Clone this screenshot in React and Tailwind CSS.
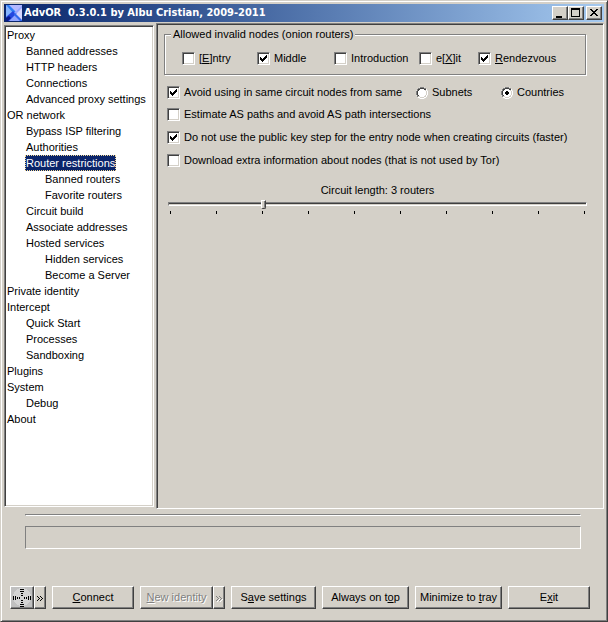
const SUNKEN =
  'border border-t-[#808080] border-l-[#808080] border-r-white border-b-white shadow-[inset_1px_1px_0_#404040,inset_-1px_-1px_0_#d4d0c8]';
const RAISED =
  'border border-t-white border-l-white border-r-[#404040] border-b-[#404040] shadow-[inset_-1px_-1px_0_#808080]';

const TREE = [
  {
    label: 'Proxy',
    children: [
      { label: 'Banned addresses' },
      { label: 'HTTP headers' },
      { label: 'Connections' },
      { label: 'Advanced proxy settings' },
    ],
  },
  {
    label: 'OR network',
    children: [
      { label: 'Bypass ISP filtering' },
      { label: 'Authorities' },
      {
        label: 'Router restrictions',
        selected: true,
        children: [{ label: 'Banned routers' }, { label: 'Favorite routers' }],
      },
      { label: 'Circuit build' },
      { label: 'Associate addresses' },
      {
        label: 'Hosted services',
        children: [{ label: 'Hidden services' }, { label: 'Become a Server' }],
      },
    ],
  },
  { label: 'Private identity' },
  {
    label: 'Intercept',
    children: [{ label: 'Quick Start' }, { label: 'Processes' }, { label: 'Sandboxing' }],
  },
  { label: 'Plugins' },
  { label: 'System', children: [{ label: 'Debug' }] },
  { label: 'About' },
];

function TreeList({ items, nested }) {
  return (
    <ul className={nested ? 'pl-[19px]' : ''}>
      {items.map((item) => (
        <li key={item.label}>
          <button
            type="button"
            className={`block h-4 px-px leading-4 whitespace-nowrap ${
              item.selected
                ? 'bg-[#0a246a] text-white outline-1 -outline-offset-1 outline-dotted outline-[#f5db95]'
                : ''
            }`}
          >
            {item.label}
          </button>
          {item.children && <TreeList items={item.children} nested />}
        </li>
      ))}
    </ul>
  );
}

function Check({ children, checked }) {
  return (
    <label className="flex items-center gap-1 leading-[15px] whitespace-nowrap">
      <span className="grid shrink-0">
        <input
          type="checkbox"
          defaultChecked={checked}
          className={`peer col-start-1 row-start-1 size-[13px] appearance-none bg-white ${SUNKEN}`}
        />
        <svg
          viewBox="0 0 13 13"
          shapeRendering="crispEdges"
          className="pointer-events-none invisible col-start-1 row-start-1 size-[13px] peer-checked:visible"
        >
          <path
            d="M3 5h1v3h-1zM4 6h1v3h-1zM5 7h1v3h-1zM6 6h1v3h-1zM7 5h1v3h-1zM8 4h1v3h-1zM9 3h1v3h-1z"
            fill="#000"
          />
        </svg>
      </span>
      <span>{children}</span>
    </label>
  );
}

function Radio({ children, checked }) {
  return (
    <label className="flex items-center gap-1 leading-[15px] whitespace-nowrap">
      <span className="grid shrink-0">
        <input
          type="radio"
          name="same-circuit"
          defaultChecked={checked}
          className="peer col-start-1 row-start-1 size-3 appearance-none rounded-full bg-white"
        />
        <svg
          viewBox="0 0 12 12"
          shapeRendering="crispEdges"
          className="pointer-events-none col-start-1 row-start-1 size-3"
        >
          <path d="M4 0h4v1h-4zM2 1h2v1h-2zM8 1h2v1h-2zM1 2h1v2h-1zM0 4h1v4h-1zM1 8h1v2h-1z" fill="#808080" />
          <path d="M4 1h4v1h-4zM2 2h2v1h-2zM8 2h2v1h-2zM2 3h1v1h-1zM1 4h1v4h-1zM2 8h1v1h-1z" fill="#404040" />
          <path d="M9 3h1v1h-1zM10 4h1v4h-1zM9 8h1v1h-1zM2 9h2v1h-2zM8 9h2v1h-2zM4 10h4v1h-4z" fill="#d4d0c8" />
          <path d="M10 2h1v2h-1zM11 4h1v4h-1zM10 8h1v2h-1zM2 10h2v1h-2zM8 10h2v1h-2zM4 11h4v1h-4z" fill="#fff" />
        </svg>
        <svg
          viewBox="0 0 12 12"
          shapeRendering="crispEdges"
          className="pointer-events-none invisible col-start-1 row-start-1 size-3 peer-checked:visible"
        >
          <path d="M5 4h2v1h1v2h-1v1h-2v-1h-1v-2h1z" fill="#000" />
        </svg>
      </span>
      <span>{children}</span>
    </label>
  );
}

function PushButton({ className, children, ...rest }) {
  return (
    <button
      type="button"
      className={`flex h-[23px] shrink-0 items-center justify-center whitespace-nowrap disabled:text-[#808080] disabled:text-shadow-[1px_1px_0_#fff] ${RAISED} ${className}`}
      {...rest}
    >
      {children}
    </button>
  );
}

function CaptionButton({ label, children }) {
  return (
    <button type="button" aria-label={label} className={`h-3.5 w-4 bg-[#d4d0c8] ${RAISED}`}>
      <svg viewBox="0 0 14 12" shapeRendering="crispEdges" className="h-3 w-3.5">
        {children}
      </svg>
    </button>
  );
}

function AppIcon() {
  return (
    <svg viewBox="0 0 16 16" className="size-4 shrink-0">
      <path d="M0 0h16v16h-16z" fill="#b4b8ff" />
      <path d="M0 0v16L8 8z" fill="#86b4ff" />
      <path d="M16 0v16L8 8z" fill="#d4d6ff" />
      <path d="M0 16h16L8 8z" fill="#8fa4ff" />
      <path d="M0 0h3l8 8-2 2z" fill="#2f80f6" />
      <path d="M0 12l7-6 3 3-7 7H0z" fill="#2448e0" />
      <path d="M0 13l3-2 2 2-3 3H0z" fill="#0a1a8c" />
      <path d="M8 8L16 0v3l-6 6z" fill="#9aa6ff" />
      <path d="M9 8l7 7v1h-2l-6-6z" fill="#2f68ee" />
    </svg>
  );
}

function CrosshairIcon() {
  return (
    <svg viewBox="0 0 22 21" shapeRendering="crispEdges" className="h-[21px] w-[22px]">
      <path d="M0 0h21v20h-21z" fill="#c0c0c0" />
      <circle cx="11" cy="10" r="9" fill="#d4d4d4" />
      <path
        d="M9 2h4v1h-4zM9 4h4v1h-4zM10 6h2v1h-2zM10 8h2v1h-2zM10 13h2v1h-2zM10 15h2v1h-2zM9 17h4v1h-4zM9 19h4v1h-4z"
        fill="#000"
      />
      <path
        d="M2 9h1v4h-1zM4 9h1v4h-1zM6 10h1v2h-1zM8 10h1v2h-1zM13 10h1v2h-1zM15 10h1v2h-1zM17 9h1v4h-1zM19 9h1v4h-1z"
        fill="#000"
      />
      <path d="M21 0h1v21h-22v-1h21z" fill="#808080" />
    </svg>
  );
}

function Chevrons({ disabled }) {
  const d = 'M0 0h1v1h1v1h1v1h-1v1h-1v1h-1v-1h1v-1h1v-1h-1v-1h-1zM3 0h1v1h1v1h1v1h-1v1h-1v1h-1v-1h1v-1h1v-1h-1v-1h-1z';
  return (
    <svg viewBox="0 0 7 6" shapeRendering="crispEdges" className="mt-0.5 h-1.5 w-[7px] shrink-0">
      {disabled && <path d={d} fill="#fff" transform="translate(1 1)" />}
      <path d={d} fill={disabled ? '#808080' : '#000'} />
    </svg>
  );
}

export default function App() {
  return (
    <div className="flex min-h-screen flex-col border border-t-[#d4d0c8] border-r-[#404040] border-b-[#404040] border-l-[#d4d0c8] bg-[#d4d0c8] p-[3px] font-['Liberation_Sans',Arial,sans-serif] text-[11px] text-black shadow-[inset_1px_1px_0_#fff,inset_-1px_-1px_0_#808080]">
      <header className="flex h-[18px] items-center bg-linear-to-r from-[#0a246a] to-[#a6caf0] px-0.5">
        <AppIcon />
        <h1 className="flex-1 pl-0.5 font-['DejaVu_Sans_Condensed','DejaVu_Sans',sans-serif] font-bold whitespace-pre text-white">
          AdvOR  0.3.0.1 by Albu Cristian, 2009-2011
        </h1>
        <div className="flex">
          <CaptionButton label="Minimize">
            <path d="M3 9h6v2h-6z" />
          </CaptionButton>
          <CaptionButton label="Maximize">
            <path d="M2 1h9v9h-9zM3 3v6h7v-6z" fillRule="evenodd" />
          </CaptionButton>
        </div>
        <div className="flex pl-0.5">
          <CaptionButton label="Close">
            <path d="M3 2h2v1h1v1h2v-1h1v-1h2v1h-1v1h-1v1h-1v1h1v1h1v1h1v1h-2v-1h-1v-1h-2v1h-1v1h-2v-1h1v-1h1v-1h1v-1h-1v-1h-1v-1h-1z" />
          </CaptionButton>
        </div>
      </header>

      <div className="mt-px flex flex-1 gap-0.5">
        <nav className={`my-0.5 w-[150px] shrink-0 bg-white p-px ${SUNKEN}`}>
          <TreeList items={TREE} />
        </nav>

        <main className={`flex-1 pt-[3px] pr-4 pl-[7px] ${SUNKEN}`}>
          <fieldset className="mr-px border border-[#808080] px-1.5 pb-2 shadow-[1px_1px_0_#fff,inset_1px_1px_0_#fff]">
            <legend className="bg-[#d4d0c8] px-0.5 leading-[14px]">Allowed invalid nodes (onion routers)</legend>
            <div className="grid grid-cols-[75px_77px_85px_59px_auto] pt-2.5 pl-[11px]">
              <Check>
                [<u>E</u>]ntry
              </Check>
              <Check checked>Middle</Check>
              <Check>Introduction</Check>
              <Check>
                e[<u>X</u>]it
              </Check>
              <Check checked>
                <u>R</u>endezvous
              </Check>
            </div>
          </fieldset>

          <div className="pl-[3px]">
            <div className="grid grid-cols-[249px_85px_auto] pt-2.5">
              <Check checked>Avoid using in same circuit nodes from same</Check>
              <Radio>Subnets</Radio>
              <Radio checked>Countries</Radio>
            </div>
            <div className="flex flex-col gap-2 pt-[7px]">
              <Check>Estimate AS paths and avoid AS path intersections</Check>
              <Check checked>
                Do not use the public key step for the entry node when creating circuits (faster)
              </Check>
              <Check>Download extra information about nodes (that is not used by Tor)</Check>
            </div>
          </div>

          <div className="flex flex-col pt-[15px] pl-1">
            <label htmlFor="circuit-length" className="text-center leading-[15px]">
              Circuit length: 3 routers
            </label>
            <input
              id="circuit-length"
              type="range"
              min="1"
              max="10"
              defaultValue="3"
              className="mt-0.5 block h-2 w-full appearance-none bg-transparent [&::-webkit-slider-runnable-track]:h-1 [&::-webkit-slider-runnable-track]:border [&::-webkit-slider-runnable-track]:border-t-[#808080] [&::-webkit-slider-runnable-track]:border-r-white [&::-webkit-slider-runnable-track]:border-b-white [&::-webkit-slider-runnable-track]:border-l-[#808080] [&::-webkit-slider-runnable-track]:shadow-[inset_0_1px_0_#404040] [&::-webkit-slider-thumb]:-mt-[3px] [&::-webkit-slider-thumb]:h-[9px] [&::-webkit-slider-thumb]:w-[5px] [&::-webkit-slider-thumb]:appearance-none [&::-webkit-slider-thumb]:rounded-b-xs [&::-webkit-slider-thumb]:border [&::-webkit-slider-thumb]:border-t-white [&::-webkit-slider-thumb]:border-r-[#404040] [&::-webkit-slider-thumb]:border-b-[#404040] [&::-webkit-slider-thumb]:border-l-white [&::-webkit-slider-thumb]:bg-[#d4d0c8] [&::-webkit-slider-thumb]:shadow-[inset_-1px_0_0_#808080]"
            />
            <div className="mt-[3px] flex justify-between px-0.5">
              {Array.from({ length: 10 }, (_, i) => (
                <span key={i} className="h-[3px] w-px bg-black" />
              ))}
            </div>
          </div>
        </main>
      </div>

      <footer className="pt-[5px] pb-[9px]">
        <div className="pr-[23px] pl-[21px]">
          <div className="h-0.5 border border-t-[#808080] border-r-white border-b-white border-l-[#808080]" />
          <div className="mt-2.5 h-[23px] border border-t-[#808080] border-r-white border-b-white border-l-[#808080]" />
        </div>
        <div className="mt-[37px] flex gap-1.5 pl-1.5">
          <div className="flex">
            <PushButton className="w-6" aria-label="Select window">
              <CrosshairIcon />
            </PushButton>
            <PushButton className="w-3" aria-label="More window options">
              <Chevrons />
            </PushButton>
          </div>
          <PushButton className="w-[82px]">
            <span>
              <u>C</u>onnect
            </span>
          </PushButton>
          <div className="flex">
            <PushButton className="w-[73px]" disabled>
              <span>
                <u>N</u>ew identity
              </span>
            </PushButton>
            <PushButton className="w-3" aria-label="More identity options" disabled>
              <Chevrons disabled />
            </PushButton>
          </div>
          <PushButton className="w-[85px]">
            <span>
              S<u>a</u>ve settings
            </span>
          </PushButton>
          <PushButton className="w-[87px]">
            <span>
              Always on t<u>o</u>p
            </span>
          </PushButton>
          <PushButton className="w-[87px]">
            <span>
              Minimize to <u>t</u>ray
            </span>
          </PushButton>
          <PushButton className="w-[82px]">
            <span>
              E<u>x</u>it
            </span>
          </PushButton>
        </div>
      </footer>
    </div>
  );
}
